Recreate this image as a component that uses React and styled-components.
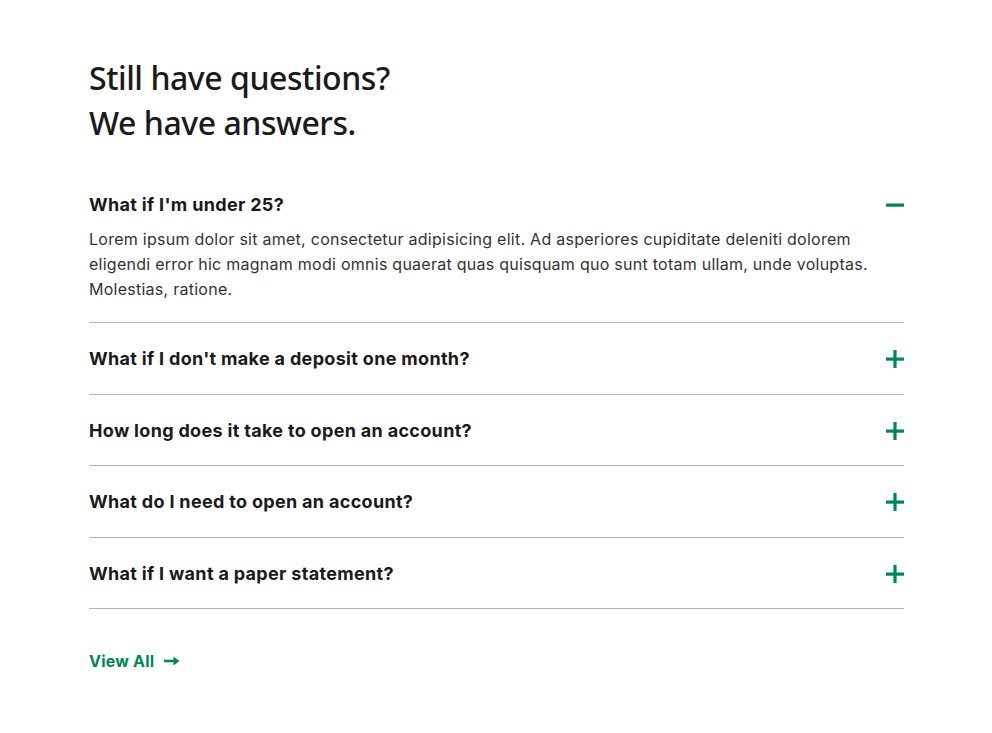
import React, { useState } from "react";
import styled, { createGlobalStyle } from "styled-components";

const Global = createGlobalStyle`
  html, body { margin: 0; padding: 0; background: #fff; }
  body { font-family: "Inter", "Noto Sans", sans-serif; color: #1a1a1a; }
  * { box-sizing: border-box; }
`;

const Page = styled.main`
  padding: 55px 88px 40px 89px;
`;

const Heading = styled.h2`
  margin: 0 0 24px;
  font-family: "Noto Sans", "DejaVu Sans", sans-serif;
  font-weight: 500;
  font-size: 32px;
  line-height: 45px;
  color: #1a1a1a;
  letter-spacing: -0.45px;
`;

const List = styled.div`
  display: flex;
  flex-direction: column;
`;

const Item = styled.div`
  border-bottom: 1px solid #b5b5b5;
  padding-bottom: ${(p) => (p.$open ? "20px" : "0")};
`;

const Question = styled.button`
  all: unset;
  width: 100%;
  display: flex;
  align-items: center;
  justify-content: space-between;
  padding: 25px 0 ${(p) => (p.$open ? "11px" : "23.5px")};
  cursor: pointer;
  font-family: "Inter", sans-serif;
  font-weight: 700;
  font-size: 18px;
  line-height: 22px;
  letter-spacing: 0.32px;
  color: #1a1a1a;
`;

const Answer = styled.p`
  margin: 0;
  font-family: "Inter", sans-serif;
  font-size: 16px;
  line-height: 25px;
  letter-spacing: 0.26px;
  color: #333;
  max-width: 790px;
`;

const ViewAll = styled.a`
  display: inline-flex;
  align-items: center;
  gap: 10px;
  margin-top: 41px;
  font-family: "Inter", sans-serif;
  font-weight: 700;
  font-size: 16px;
  line-height: 22px;
  letter-spacing: 0.2px;
  color: #00855a;
  text-decoration: none;
`;

const Toggle = ({ open }) => (
  <svg width="20" height="20" viewBox="0 0 20 20" style={{ marginRight: -1 }}>
    <rect x="1" y="8.5" width="18" height="3.2" fill="#00855a" />
    {!open && <rect x="8.4" y="1" width="3.2" height="18" fill="#00855a" />}
  </svg>
);

const faqs = [
  {
    q: "What if I'm under 25?",
    a: "Lorem ipsum dolor sit amet, consectetur adipisicing elit. Ad asperiores cupiditate deleniti dolorem eligendi error hic magnam modi omnis quaerat quas quisquam quo sunt totam ullam, unde voluptas. Molestias, ratione.",
  },
  { q: "What if I don't make a deposit one month?", a: "" },
  { q: "How long does it take to open an account?", a: "" },
  { q: "What do I need to open an account?", a: "" },
  { q: "What if I want a paper statement?", a: "" },
];

export default function App() {
  const [open, setOpen] = useState(0);
  return (
    <Page>
      <Global />
      <Heading>
        Still have questions?
        <br />
        We have answers.
      </Heading>
      <List>
        {faqs.map((f, i) => (
          <Item key={i} $open={open === i}>
            <Question $open={open === i} onClick={() => setOpen(open === i ? -1 : i)}>
              {f.q}
              <Toggle open={open === i} />
            </Question>
            {open === i && <Answer>{f.a}</Answer>}
          </Item>
        ))}
      </List>
      <ViewAll href="#">
        View All
        <svg width="16" height="10" viewBox="0 0 16 10">
          <path d="M0 5h12" stroke="#00855a" strokeWidth="2.6" />
          <path d="M9.5 0.5l6 4.5-6 4.5z" fill="#00855a" />
        </svg>
      </ViewAll>
    </Page>
  );
}
